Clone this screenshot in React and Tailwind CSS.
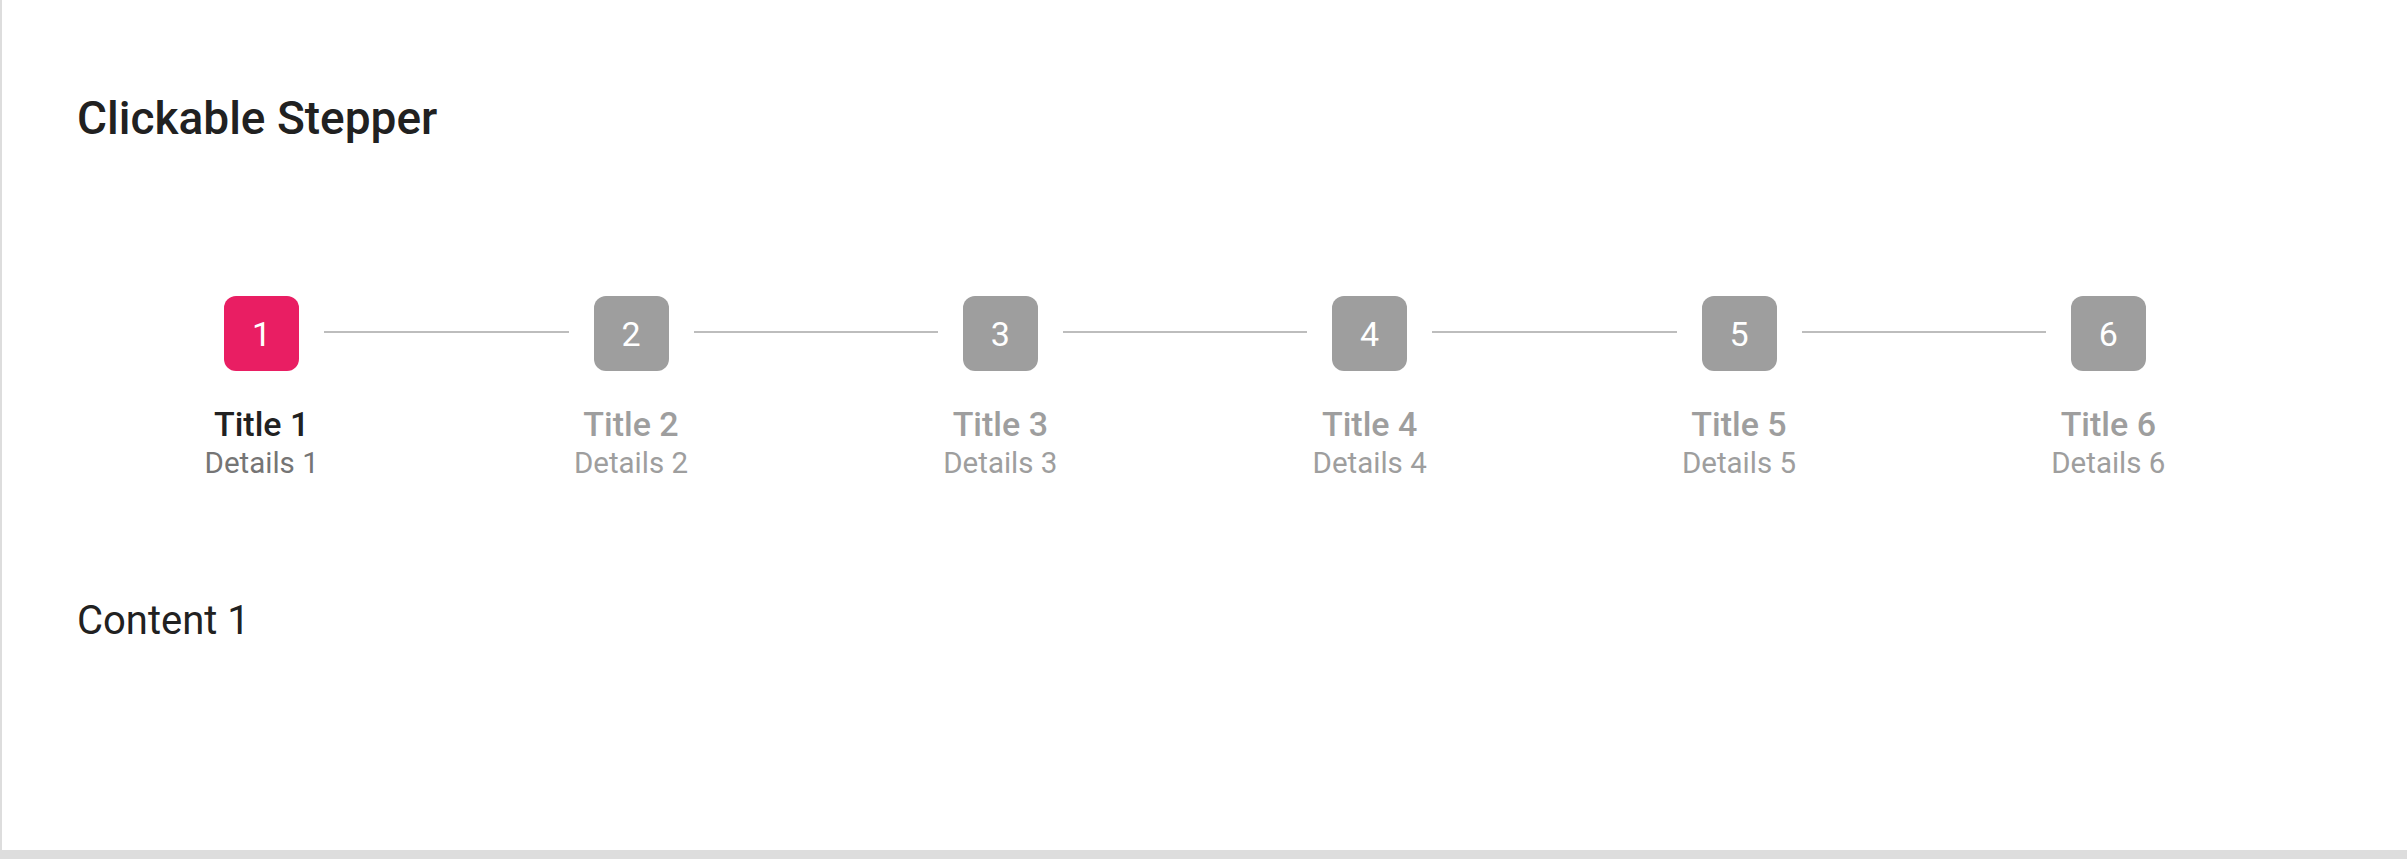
import React, { useState } from "react";

const steps = [1, 2, 3, 4, 5, 6];

export default function App() {
  const [active, setActive] = useState(0);
  return (
    <div
      className="h-[859px] w-full bg-[#dddddd] overflow-hidden"
      style={{ fontFamily: "Roboto, 'Noto Sans', sans-serif" }}
    >
      <div className="ml-[2px] h-[850px] bg-white pl-[75px] pr-[114px] pt-[95px]">
        <h1 className="text-[46px] leading-none font-medium text-[#212121]">
          Clickable Stepper
        </h1>
        <div className="mt-[155px] grid grid-cols-6">
          {steps.map((n, i) => {
            const isActive = i === active;
            return (
              <button
                key={n}
                onClick={() => setActive(i)}
                className="flex flex-col items-center cursor-pointer"
              >
                <div className="flex w-full items-center">
                  <div
                    className={
                      i === 0
                        ? "flex-1 mr-[25px] mb-[3px] h-[2px]"
                        : "flex-1 mr-[25px] mb-[3px] h-[2px] bg-[#bdbdbd]"
                    }
                  />
                  <div
                    className={
                      isActive
                        ? "flex h-[75px] w-[75px] items-center justify-center rounded-[12px] bg-[#e91e63] text-[34px] leading-none text-white"
                        : "flex h-[75px] w-[75px] items-center justify-center rounded-[12px] bg-[#9e9e9e] text-[34px] leading-none text-white"
                    }
                  >
                    {n}
                  </div>
                  <div
                    className={
                      i === steps.length - 1
                        ? "flex-1 ml-[25px] mb-[3px] h-[2px]"
                        : "flex-1 ml-[25px] mb-[3px] h-[2px] bg-[#bdbdbd]"
                    }
                  />
                </div>
                <div
                  className={
                    isActive
                      ? "mt-[36px] text-[34px] leading-none font-medium text-[#212121]"
                      : "mt-[36px] text-[34px] leading-none font-medium text-[#9e9e9e]"
                  }
                >
                  Title {n}
                </div>
                <div
                  className={
                    isActive
                      ? "mt-[8px] text-[29.5px] leading-none text-[#757575]"
                      : "mt-[8px] text-[29.5px] leading-none text-[#9e9e9e]"
                  }
                >
                  Details {n}
                </div>
              </button>
            );
          })}
        </div>
        <div className="mt-[122px] text-[40px] leading-none text-[#212121]">
          Content {active + 1}
        </div>
      </div>
    </div>
  );
}
